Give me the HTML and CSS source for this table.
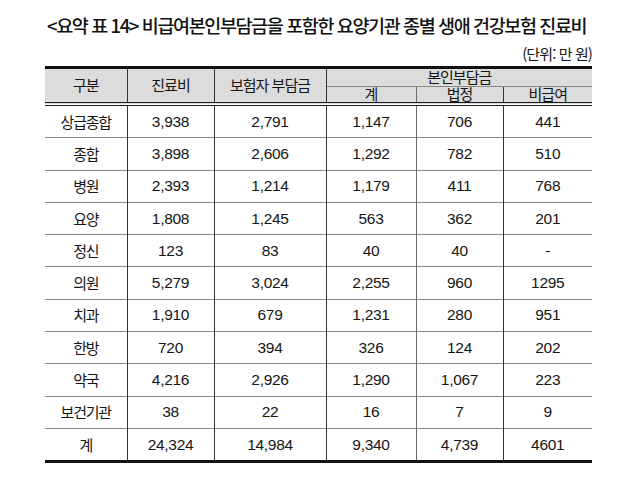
FILE: index.html
```html
<!DOCTYPE html>
<html lang="ko">
<head>
<meta charset="utf-8">
<link rel="stylesheet" href="styles.css">
</head>
<body>
<div class="page">
  <h1 class="title">&lt;요약 표 14&gt; 비급여본인부담금을 포함한 요양기관 종별 생애 건강보험 진료비</h1>
  <div class="unit">(단위: 만 원)</div>
  <table class="data">
    <colgroup>
      <col class="c1"><col class="c2"><col class="c3"><col class="c4"><col class="c5"><col class="c6">
    </colgroup>
    <thead>
      <tr class="h1">
        <th rowspan="2">구분</th>
        <th rowspan="2">진료비</th>
        <th rowspan="2">보험자 부담금</th>
        <th colspan="3" class="group">본인부담금</th>
      </tr>
      <tr class="h2">
        <th>계</th>
        <th class="light">법정</th>
        <th>비급여</th>
      </tr>
    </thead>
    <tbody>
      <tr><th scope="row">상급종합</th><td>3,938</td><td>2,791</td><td>1,147</td><td class="light">706</td><td>441</td></tr>
      <tr><th scope="row">종합</th><td>3,898</td><td>2,606</td><td>1,292</td><td class="light">782</td><td>510</td></tr>
      <tr><th scope="row">병원</th><td>2,393</td><td>1,214</td><td>1,179</td><td class="light">411</td><td>768</td></tr>
      <tr><th scope="row">요양</th><td>1,808</td><td>1,245</td><td>563</td><td class="light">362</td><td>201</td></tr>
      <tr><th scope="row">정신</th><td>123</td><td>83</td><td>40</td><td class="light">40</td><td>-</td></tr>
      <tr><th scope="row">의원</th><td>5,279</td><td>3,024</td><td>2,255</td><td class="light">960</td><td>1295</td></tr>
      <tr><th scope="row">치과</th><td>1,910</td><td>679</td><td>1,231</td><td class="light">280</td><td>951</td></tr>
      <tr><th scope="row">한방</th><td>720</td><td>394</td><td>326</td><td class="light">124</td><td>202</td></tr>
      <tr><th scope="row">약국</th><td>4,216</td><td>2,926</td><td>1,290</td><td class="light">1,067</td><td>223</td></tr>
      <tr><th scope="row">보건기관</th><td>38</td><td>22</td><td>16</td><td class="light">7</td><td>9</td></tr>
      <tr class="total"><th scope="row">계</th><td>24,324</td><td>14,984</td><td>9,340</td><td class="light">4,739</td><td>4601</td></tr>
    </tbody>
  </table>
</div>
</body>
</html>
```

FILE: styles.css
```css
html, body {
  margin: 0;
  padding: 0;
  background: #ffffff;
}

body {
  font-family: "Liberation Sans", "Noto Sans CJK KR", sans-serif;
  color: #151515;
}

.page {
  width: 547px;
  margin-left: 45px;
  padding-top: 13px;
}

.title {
  margin: 0 0 0 2px;
  font-family: "Noto Sans CJK KR", sans-serif;
  font-size: 18.5px;
  font-weight: 500;
  line-height: 25px;
  letter-spacing: -1.4px;
  white-space: nowrap;
  color: #111111;
}

.unit {
  margin-top: 6px;
  text-align: right;
  font-family: "Noto Sans CJK KR", sans-serif;
  font-size: 15px;
  line-height: 20px;
  letter-spacing: -0.9px;
  color: #151515;
}

.data {
  margin-top: 2px;
  width: 547px;
  border-collapse: collapse;
  table-layout: fixed;
  font-size: 15.5px;
}

.c1 { width: 82px; }
.c2 { width: 87px; }
.c3 { width: 112px; }
.c4 { width: 90px; }
.c5 { width: 87px; }
.c6 { width: 89px; }

.data thead {
  background: #dcdcdc;
  border-top: 3px solid #111111;
  border-bottom: 4px double #1a1a1a;
}

.data thead th {
  font-weight: 400;
  padding: 0;
  text-align: center;
  border-left: 1px solid #333333;
  line-height: 15px;
  font-size: 15px;
  letter-spacing: -1px;
}

.data thead th:first-child {
  border-left: none;
}

.h1 th {
  height: 17px;
}

.h2 th {
  height: 15px;
  border-top: 1px solid #888888;
}

.data thead .h2 th:first-child {
  border-left: 1px solid #333333;
}

.data td,
.data tbody th {
  height: 31.3px;
  padding: 0;
  text-align: center;
  font-weight: 400;
  border-top: 1px solid #8a8a8a;
  border-left: 1px solid #333333;
  line-height: 20px;
  letter-spacing: -0.3px;
}

.data tbody th {
  border-left: none;
  font-family: "Noto Sans CJK KR", sans-serif;
  font-size: 15px;
  letter-spacing: -1.2px;
}

.data tbody tr:first-child td,
.data tbody tr:first-child th {
  border-top: none;
}

.data .light {
  border-left-color: #6a6a6a;
}

.data .total td,
.data .total th {
  border-bottom: 3px solid #111111;
}
```
